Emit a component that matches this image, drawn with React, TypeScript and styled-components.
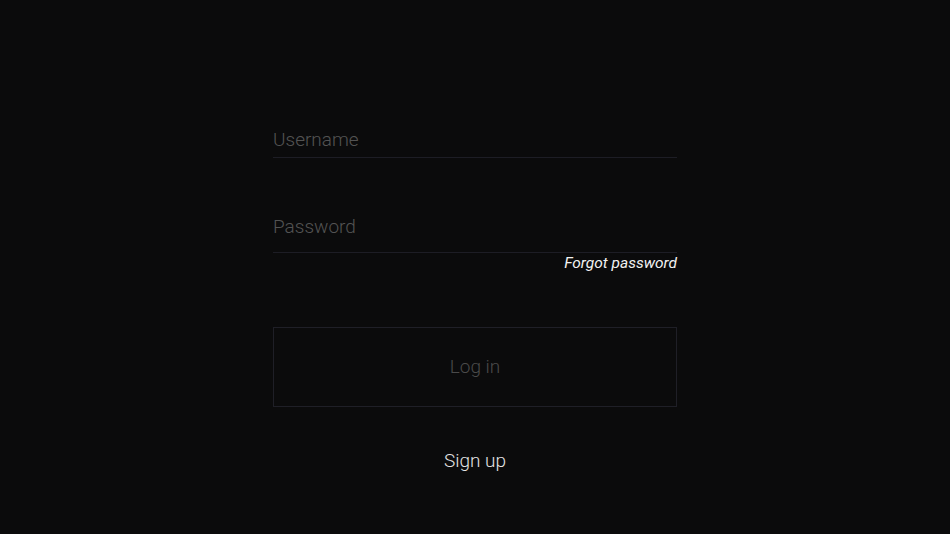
import React from "react";
import styled, { createGlobalStyle } from "styled-components";

const GlobalStyle = createGlobalStyle`
  html, body {
    margin: 0;
    padding: 0;
    background: #0b0b0c;
  }
  body {
    font-family: Roboto, "Liberation Sans", sans-serif;
  }
  * { box-sizing: border-box; }
`;

const Page = styled.div`
  width: 950px;
  height: 534px;
  background: #0b0b0c;
  display: flex;
  justify-content: center;
  padding-top: 128px;
`;

const Form = styled.form`
  width: 404px;
  display: flex;
  flex-direction: column;
`;

const Field = styled.input<{ $gap?: number; $pad: number }>`
  display: block;
  width: 100%;
  height: ${(p) => 22 + p.$pad + 1}px;
  margin: ${(p) => p.$gap ?? 0}px 0 0;
  padding: 0 0 ${(p) => p.$pad}px;
  background: transparent;
  border: none;
  border-bottom: 1px solid #1d1d25;
  outline: none;
  font-family: Roboto, "Liberation Sans", sans-serif;
  font-weight: 300;
  font-size: 19px;
  line-height: 22px;
  color: #ddd;
  &::placeholder {
    color: #535353;
  }
`;

const Forgot = styled.a`
  align-self: flex-end;
  margin-top: 1px;
  font-family: Roboto, "Liberation Sans", sans-serif;
  font-style: italic;
  font-weight: 400;
  font-size: 15.5px;
  line-height: 18px;
  color: #f2f2f2;
  text-decoration: none;
`;

const LoginButton = styled.button`
  margin-top: 55px;
  height: 80px;
  width: 100%;
  padding: 0;
  background: transparent;
  border: 1px solid #1f1f27;
  font-family: Roboto, "Liberation Sans", sans-serif;
  font-weight: 300;
  font-size: 19px;
  line-height: 22px;
  color: #4a4a4a;
  cursor: pointer;
`;

const SignUp = styled.a`
  align-self: center;
  margin-top: 43px;
  font-family: Roboto, "Liberation Sans", sans-serif;
  font-weight: 300;
  font-size: 19px;
  line-height: 22px;
  color: #e4e4e4;
  text-decoration: none;
`;

export default function App() {
  return (
    <>
      <GlobalStyle />
      <Page>
        <Form onSubmit={(e) => e.preventDefault()}>
          <Field type="text" placeholder="Username" $pad={7} />
          <Field type="password" placeholder="Password" $gap={57} $pad={15} />
          <Forgot href="#">Forgot password</Forgot>
          <LoginButton type="submit">Log in</LoginButton>
          <SignUp href="#">Sign up</SignUp>
        </Form>
      </Page>
    </>
  );
}
